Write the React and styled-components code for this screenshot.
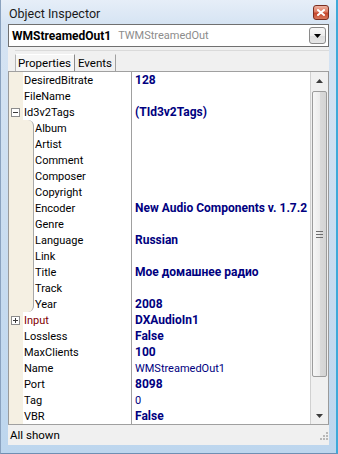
import React from "react";
import styled, { createGlobalStyle } from "styled-components";

const GlobalStyle = createGlobalStyle`
  html, body {
    margin: 0;
    padding: 0;
    background: #ffffff;
  }
  body {
    font-family: Roboto, "Liberation Sans", sans-serif;
    font-size: 11px;
  }
`;

const Window = styled.div`
  width: 338px;
  height: 454px;
  box-sizing: border-box;
  display: flex;
  flex-direction: column;
  padding: 0 7px 8px 7px;
  background: linear-gradient(180deg, #e6eef8 0px, #d6e4f3 24px, #c7dbef 60%, #bdd6ee 100%);
  border-right: 2px solid #3fa9d9;
  border-left: 1px solid #8aa2bf;
  border-bottom: 1px solid #6f8fb3;
`;

const TitleBar = styled.div`
  height: 24px;
  flex: none;
  display: flex;
  align-items: center;
  justify-content: space-between;
  padding: 0 0 0 1px;
`;

const Title = styled.span`
  font-size: 12.5px;
  color: #1a1a1a;
  padding-top: 2px;
`;

const CloseButton = styled.div`
  width: 16px;
  height: 15px;
  margin-top: 1px;
  box-sizing: border-box;
  border: 1px solid #7a2e22;
  border-radius: 3px;
  background: linear-gradient(180deg, #eeb2a2 0%, #dc7a62 45%, #c4452c 55%, #d8785c 100%);
  display: flex;
  align-items: center;
  justify-content: center;
`;

const Client = styled.div`
  flex: 1;
  display: flex;
  flex-direction: column;
  background: #f0f0f0;
  min-height: 0;
`;

const Combo = styled.div`
  height: 23px;
  flex: none;
  box-sizing: border-box;
  border: 1px solid #707070;
  background: #ffffff;
  display: flex;
  align-items: center;
  padding: 0 2px 0 3px;
  gap: 7px;
`;

const ComboName = styled.span`
  font-weight: bold;
  font-size: 12px;
  color: #000;
`;

const ComboType = styled.span`
  font-size: 11px;
  color: #8c8c8c;
  flex: 1;
`;

const DropButton = styled.div`
  width: 17px;
  height: 17px;
  box-sizing: border-box;
  border: 1px solid #8a8a8a;
  border-radius: 3px;
  background: linear-gradient(180deg, #f7f7f7 0%, #ececec 50%, #dcdcdc 51%, #e6e6e6 100%);
  display: flex;
  align-items: center;
  justify-content: center;
`;

const TabStrip = styled.div`
  height: 20px;
  flex: none;
  margin: 3px 0 0 7px;
  border-top: 1px solid #dadada;
  display: flex;
  align-items: flex-end;
`;

const Tab = styled.div`
  height: 17px;
  box-sizing: border-box;
  display: flex;
  align-items: center;
  padding: 0 3px 0 2px;
  color: #000;
  font-size: 11.5px;
  border-left: 1px solid ${(p) => (p.$active ? "#b4b4b4" : "transparent")};
  border-top: 1px solid ${(p) => (p.$active ? "#ffffff" : "transparent")};
  border-right: 1px solid ${(p) => (p.$active ? "#8a8a8a" : "#a0a0a0")};
  background: ${(p) => (p.$active ? "#f6f6f6" : "transparent")};
`;

const Grid = styled.div`
  height: 352px;
  flex: none;
  display: flex;
  border-top: 1px solid #a0a0a0;
  border-left: 1px solid #9a9a9a;
  border-right: 1px solid #9a9a9a;
  background: #ffffff;
`;

const Rows = styled.div`
  flex: 1;
  display: flex;
  flex-direction: column;
  border-right: 1px solid #d0d0d0;
`;

const Row = styled.div`
  height: 16px;
  display: flex;
  align-items: stretch;
`;

const Gutter = styled.div`
  width: ${(p) => p.$width}px;
  flex: none;
  box-sizing: border-box;
  background: #f5f0e3;
  display: flex;
  align-items: center;
  padding-left: 2px;
  border-right: ${(p) => (p.$child ? "1px solid #a8a8a8" : "none")};
  border-top-right-radius: ${(p) => (p.$first ? "6px" : "0")};
  border-bottom-right-radius: ${(p) => (p.$last ? "6px" : "0")};
`;

const Expander = styled.div`
  width: 9px;
  height: 9px;
  box-sizing: border-box;
  border: 1px solid #8c8c8c;
  background: #ffffff;
  position: relative;
  &::before {
    content: "";
    position: absolute;
    left: 1px;
    top: 3px;
    width: 5px;
    height: 1px;
    background: #3a3a3a;
  }
  &::after {
    content: "";
    display: ${(p) => (p.$open ? "none" : "block")};
    position: absolute;
    left: 3px;
    top: 1px;
    width: 1px;
    height: 5px;
    background: #3a3a3a;
  }
`;

const NameCell = styled.div`
  flex: none;
  width: ${(p) => p.$width}px;
  box-sizing: border-box;
  border-right: 1px solid #a0a0a0;
  padding-left: 1px;
  display: flex;
  align-items: center;
  color: ${(p) => (p.$link ? "#800000" : "#000000")};
  font-size: 11px;
  white-space: nowrap;
`;

const ValueCell = styled.div`
  flex: 1;
  display: flex;
  align-items: center;
  padding-left: 3px;
  color: #000080;
  font-size: ${(p) => (p.$bold ? "12px" : "11px")};
  font-weight: ${(p) => (p.$bold ? "bold" : "normal")};
  white-space: nowrap;
`;

const ScrollBar = styled.div`
  width: 17px;
  flex: none;
  display: flex;
  flex-direction: column;
  background: #f0f0f0;
`;

const ScrollArrow = styled.div`
  height: 17px;
  flex: none;
  display: flex;
  align-items: center;
  justify-content: center;
`;

const ScrollTrack = styled.div`
  flex: 1;
  display: flex;
  flex-direction: column;
  padding: 2px 1px 30px 1px;
`;

const Thumb = styled.div`
  flex: 1;
  box-sizing: border-box;
  border: 1px solid #9c9c9c;
  border-radius: 2px;
  background: linear-gradient(90deg, #f6f6f6 0%, #ececec 50%, #dadada 51%, #d4d4d4 100%);
  display: flex;
  align-items: center;
  justify-content: center;
`;

const StatusBar = styled.div`
  flex: 1;
  display: flex;
  align-items: center;
  justify-content: space-between;
  border-top: 1px solid #a0a0a0;
  padding: 0 1px 0 2px;
  font-size: 11.5px;
  color: #000;
`;

const Grip = styled.div`
  align-self: flex-end;
  margin-bottom: 2px;
`;

const tagChildren = [
  { name: "Album" },
  { name: "Artist" },
  { name: "Comment" },
  { name: "Composer" },
  { name: "Copyright" },
  { name: "Encoder", value: "New Audio Components v. 1.7.2" },
  { name: "Genre" },
  { name: "Language", value: "Russian" },
  { name: "Link" },
  { name: "Title", value: "Мое домашнее радио" },
  { name: "Track" },
  { name: "Year", value: "2008" },
];

const properties = [
  { name: "DesiredBitrate", value: "128" },
  { name: "FileName" },
  { name: "Id3v2Tags", value: "(TId3v2Tags)", expander: "open", children: tagChildren },
  { name: "Input", value: "DXAudioIn1", expander: "closed", link: true },
  { name: "Lossless", value: "False" },
  { name: "MaxClients", value: "100" },
  { name: "Name", value: "WMStreamedOut1", plain: true },
  { name: "Port", value: "8098" },
  { name: "Tag", value: "0", plain: true },
  { name: "VBR", value: "False" },
];

const Triangle = ({ up, color = "#000" }) => (
  <svg width="7" height="4" viewBox="0 0 7 4">
    <path d={up ? "M0 4 L3.5 0 L7 4 Z" : "M0 0 L7 0 L3.5 4 Z"} fill={color} />
  </svg>
);

const PropertyRow = ({ item, child, first, last }) => (
  <Row>
    <Gutter $width={child ? 25 : 14} $child={child} $first={first} $last={last}>
      {item.expander && <Expander $open={item.expander === "open"} />}
    </Gutter>
    <NameCell $width={child ? 98 : 109} $link={item.link}>
      {item.name}
    </NameCell>
    <ValueCell $bold={!item.plain}>{item.value}</ValueCell>
  </Row>
);

const App = () => {
  const rows = [];
  properties.forEach((p) => {
    rows.push(<PropertyRow key={p.name} item={p} />);
    if (p.children) {
      p.children.forEach((c, i) =>
        rows.push(
          <PropertyRow
            key={c.name}
            item={c}
            child
            first={i === 0}
            last={i === p.children.length - 1}
          />
        )
      );
    }
  });

  return (
    <>
      <GlobalStyle />
      <Window>
        <TitleBar>
          <Title>Object Inspector</Title>
          <CloseButton>
            <svg width="8" height="7" viewBox="0 0 8 7">
              <path d="M1 1 L7 6 M7 1 L1 6" stroke="#ffffff" strokeWidth="2" strokeLinecap="square" />
            </svg>
          </CloseButton>
        </TitleBar>
        <Client>
          <Combo>
            <ComboName>WMStreamedOut1</ComboName>
            <ComboType>TWMStreamedOut</ComboType>
            <DropButton>
              <Triangle />
            </DropButton>
          </Combo>
          <TabStrip>
            <Tab $active>Properties</Tab>
            <Tab>Events</Tab>
          </TabStrip>
          <Grid>
            <Rows>{rows}</Rows>
            <ScrollBar>
              <ScrollArrow>
                <Triangle up color="#3c3c3c" />
              </ScrollArrow>
              <ScrollTrack>
                <Thumb>
                  <svg width="7" height="7" viewBox="0 0 7 7">
                    <path d="M0 0.5 H7 M0 3.5 H7 M0 6.5 H7" stroke="#6e6e6e" strokeWidth="1" />
                  </svg>
                </Thumb>
              </ScrollTrack>
              <ScrollArrow>
                <Triangle color="#3c3c3c" />
              </ScrollArrow>
            </ScrollBar>
          </Grid>
          <StatusBar>
            <span>All shown</span>
            <Grip>
              <svg width="10" height="10" viewBox="0 0 10 10">
                <g fill="#b8b8b8">
                  <rect x="8" y="2" width="2" height="2" />
                  <rect x="5" y="5" width="2" height="2" />
                  <rect x="8" y="5" width="2" height="2" />
                  <rect x="2" y="8" width="2" height="2" />
                  <rect x="5" y="8" width="2" height="2" />
                  <rect x="8" y="8" width="2" height="2" />
                </g>
              </svg>
            </Grip>
          </StatusBar>
        </Client>
      </Window>
    </>
  );
};

export default App;
